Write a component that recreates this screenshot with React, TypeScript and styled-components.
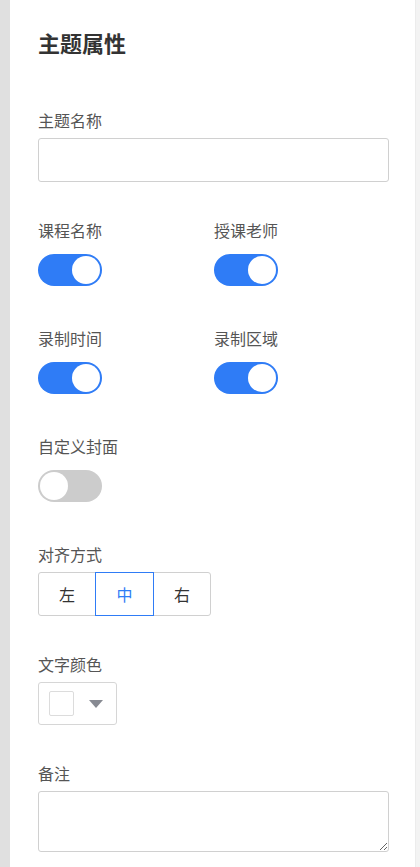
import { useState } from "react";
import styled, { createGlobalStyle } from "styled-components";

const GlobalStyle = createGlobalStyle`
  html, body {
    margin: 0;
    padding: 0;
    background: #fff;
  }
  body {
    font-family: "Noto Sans CJK SC", "Noto Sans", sans-serif;
  }
  * {
    box-sizing: border-box;
  }
`;

const Page = styled.div`
  display: flex;
  width: 420px;
  height: 867px;
  overflow: hidden;
`;

const SideBar = styled.div`
  width: 10px;
  flex: none;
  background: #e0e0e0;
`;

const Panel = styled.div`
  flex: 1;
  padding: 28px 26px 0 28px;
  background: #fff;
`;

const ScrollTrack = styled.div`
  width: 5px;
  flex: none;
  background: #f3f3f3;
  border-left: 1px solid #ececec;
`;

const Title = styled.h2`
  margin: 0 0 54px;
  font-size: 22px;
  line-height: 28px;
  font-weight: 700;
  color: #333;
`;

const Field = styled.div`
  margin-bottom: 38px;
`;

const Label = styled.div`
  font-size: 16px;
  line-height: 20px;
  color: #555;
  margin-bottom: 8px;
`;

const TextInput = styled.input`
  display: block;
  width: 100%;
  height: 44px;
  border: 1px solid #d0d0d0;
  border-radius: 3px;
  outline: none;
  padding: 0 10px;
  font: inherit;
`;

const Grid = styled.div`
  display: grid;
  grid-template-columns: 176px 1fr;
`;

const SwitchRow = styled.div`
  padding: 6px 0 4px;
`;

const Track = styled.button<{ $on: boolean }>`
  display: block;
  position: relative;
  width: 64px;
  height: 32px;
  padding: 0;
  border: none;
  border-radius: 16px;
  cursor: pointer;
  background: ${(p) => (p.$on ? "#2f7cf6" : "#cccccc")};
`;

const Knob = styled.span<{ $on: boolean }>`
  position: absolute;
  top: 2px;
  left: ${(p) => (p.$on ? "34px" : "2px")};
  width: 28px;
  height: 28px;
  border-radius: 50%;
  background: #fff;
`;

const Segments = styled.div`
  display: flex;
  height: 44px;
`;

const Segment = styled.button<{ $active: boolean }>`
  width: ${(p) => (p.$active ? "59px" : "58px")};
  height: 44px;
  padding: 0;
  background: #fff;
  font: inherit;
  font-size: 16px;
  cursor: pointer;
  color: ${(p) => (p.$active ? "#2f7cf6" : "#333")};
  border: 1px solid ${(p) => (p.$active ? "#2f7cf6" : "#d0d0d0")};
  position: relative;
  z-index: ${(p) => (p.$active ? 1 : 0)};
  &:not(:first-child) {
    margin-left: -1px;
  }
  &:first-child {
    border-radius: 3px 0 0 3px;
  }
  &:last-child {
    border-radius: 0 3px 3px 0;
  }
`;

const ColorPicker = styled.div`
  display: flex;
  align-items: center;
  gap: 15px;
  width: 79px;
  height: 43px;
  padding-left: 10px;
  border: 1px solid #d6d6d6;
  border-radius: 3px;
  margin-top: 1px;
`;

const Swatch = styled.span<{ $color: string }>`
  width: 25px;
  height: 25px;
  border: 1px solid #dcdcdc;
  border-radius: 2px;
  background: ${(p) => p.$color};
`;

const Caret = styled.span`
  width: 0;
  height: 0;
  border-left: 7px solid transparent;
  border-right: 7px solid transparent;
  border-top: 8px solid #878a92;
`;

const Notes = styled.textarea`
  display: block;
  width: 100%;
  height: 61px;
  border: 1px solid #d0d0d0;
  border-radius: 3px;
  outline: none;
  resize: vertical;
  font: inherit;
  padding: 6px 10px;
`;

function Switch({ on, onToggle }: { on: boolean; onToggle: () => void }) {
  return (
    <SwitchRow>
      <Track $on={on} onClick={onToggle}>
        <Knob $on={on} />
      </Track>
    </SwitchRow>
  );
}

export default function App() {
  const [flags, setFlags] = useState({
    course: true,
    teacher: true,
    time: true,
    area: true,
    cover: false,
  });
  const [align, setAlign] = useState("中");

  const toggle = (k: keyof typeof flags) => setFlags((f) => ({ ...f, [k]: !f[k] }));

  return (
    <Page>
      <GlobalStyle />
      <SideBar />
      <Panel>
        <Title>主题属性</Title>

        <Field>
          <Label>主题名称</Label>
          <TextInput />
        </Field>

        <Grid>
          <Field>
            <Label>课程名称</Label>
            <Switch on={flags.course} onToggle={() => toggle("course")} />
          </Field>
          <Field>
            <Label>授课老师</Label>
            <Switch on={flags.teacher} onToggle={() => toggle("teacher")} />
          </Field>
          <Field>
            <Label>录制时间</Label>
            <Switch on={flags.time} onToggle={() => toggle("time")} />
          </Field>
          <Field>
            <Label>录制区域</Label>
            <Switch on={flags.area} onToggle={() => toggle("area")} />
          </Field>
        </Grid>

        <Field>
          <Label>自定义封面</Label>
          <Switch on={flags.cover} onToggle={() => toggle("cover")} />
        </Field>

        <Field>
          <Label>对齐方式</Label>
          <Segments>
            {["左", "中", "右"].map((a) => (
              <Segment key={a} $active={align === a} onClick={() => setAlign(a)}>
                {a}
              </Segment>
            ))}
          </Segments>
        </Field>

        <Field>
          <Label>文字颜色</Label>
          <ColorPicker>
            <Swatch $color="#ffffff" />
            <Caret />
          </ColorPicker>
        </Field>

        <Field>
          <Label>备注</Label>
          <Notes />
        </Field>
      </Panel>
      <ScrollTrack />
    </Page>
  );
}
